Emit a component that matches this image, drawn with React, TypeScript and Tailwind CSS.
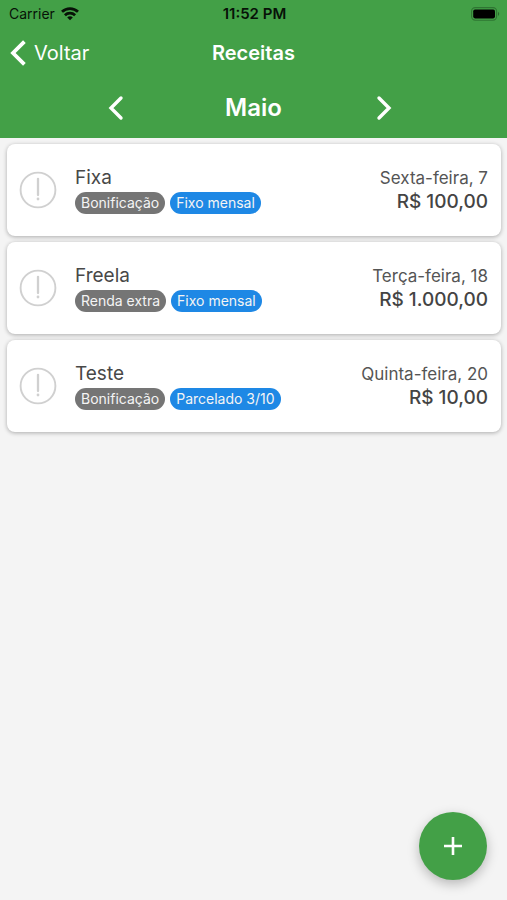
type Income = {
  name: string;
  category: string;
  recurrence: string;
  date: string;
  amount: string;
};

const incomes: Income[] = [
  { name: "Fixa", category: "Bonificação", recurrence: "Fixo mensal", date: "Sexta-feira, 7", amount: "R$ 100,00" },
  { name: "Freela", category: "Renda extra", recurrence: "Fixo mensal", date: "Terça-feira, 18", amount: "R$ 1.000,00" },
  { name: "Teste", category: "Bonificação", recurrence: "Parcelado 3/10", date: "Quinta-feira, 20", amount: "R$ 10,00" },
];

function WifiIcon() {
  return (
    <svg width="18" height="14" viewBox="0 0 18 14" fill="none" stroke="#071207" strokeWidth="2.8" aria-hidden="true">
      <path d="M1 4.8C5.5.6 12.5.6 17 4.8" />
      <path d="M3.9 8.2c2.9-2.7 7.3-2.7 10.2 0" />
      <path d="M9 13.2 6.2 10.4c1.6-1.4 4-1.4 5.6 0z" fill="#071207" stroke="none" />
    </svg>
  );
}

function BatteryIcon() {
  return (
    <svg width="29" height="14" viewBox="0 0 29 14" aria-hidden="true">
      <rect x=".6" y=".6" width="25" height="12.6" rx="3.6" fill="none" stroke="#2f7533" strokeWidth="1.1" />
      <rect x="2.2" y="2.4" width="21.8" height="9" rx="1.8" fill="#000" />
      <path d="M27 4.8c1.6.8 1.6 3.4 0 4.2z" fill="#2b692e" />
    </svg>
  );
}

function BackIcon() {
  return (
    <svg width="16" height="26" viewBox="0 0 16 26" fill="none" stroke="#fff" strokeWidth="3.8" aria-hidden="true">
      <path d="M14.4 1.6 3 13l11.4 11.4" />
    </svg>
  );
}

function ChevronIcon({ next = false }: { next?: boolean }) {
  return (
    <svg width="16" height="26" viewBox="0 0 16 26" fill="none" stroke="#fff" strokeWidth="3.4" strokeLinecap="round" aria-hidden="true">
      <path d={next ? "M3 3l10 10L3 23" : "M13 3 3 13l10 10"} />
    </svg>
  );
}

function AlertIcon() {
  return (
    <svg width="38" height="38" viewBox="0 0 38 38" fill="none" stroke="#d0d0d0" aria-hidden="true">
      <circle cx="19" cy="19" r="17.4" strokeWidth="1.9" />
      <path d="M19 7.8v16.2" strokeWidth="2.3" strokeLinecap="round" />
      <circle cx="19" cy="28" r="1.4" fill="#d0d0d0" stroke="none" />
    </svg>
  );
}

function IncomeCard({ income }: { income: Income }) {
  return (
    <li className="flex h-[92px] items-center rounded-lg bg-white pr-[13px] pl-3 shadow-[0_1px_4px_rgba(0,0,0,0.3)]">
      <AlertIcon />
      <div className="ml-[18px] flex flex-1 flex-col items-start">
        <h2 className="text-[19px] leading-6 text-[#484848]">{income.name}</h2>
        <div className="mt-0.5 flex gap-[5px] text-sm leading-[22px] text-[#f4f4f4]">
          <span className="rounded-full bg-[#757575] px-1.5">{income.category}</span>
          <span className="rounded-full bg-[#1e88e5] px-1.5">{income.recurrence}</span>
        </div>
      </div>
      <div className="text-right">
        <p className="text-[17px] leading-6 text-[#555]">{income.date}</p>
        <p className="text-[19px] leading-6 font-medium text-[#444]">{income.amount}</p>
      </div>
    </li>
  );
}

export default function App() {
  return (
    <div className="flex min-h-screen flex-col bg-[#f4f4f4] font-['Inter','Liberation_Sans',sans-serif]">
      <header className="bg-[#43a047] text-white">
        <div className="grid h-[27px] grid-cols-3 items-center pr-[7px] pl-[9px] text-sm text-[#071207]">
          <div className="flex items-center gap-1.5">
            <span>Carrier</span>
            <WifiIcon />
          </div>
          <span className="text-center text-[15px] font-semibold">11:52 PM</span>
          <div className="flex justify-end">
            <BatteryIcon />
          </div>
        </div>
        <nav className="grid h-[51px] grid-cols-3 items-center px-[10px]">
          <button type="button" className="flex items-center gap-2 text-xl">
            <BackIcon />
            Voltar
          </button>
          <h1 className="text-center text-xl font-semibold">Receitas</h1>
        </nav>
        <div className="flex h-[60px] items-center justify-between px-[108px]">
          <button type="button" aria-label="Mês anterior" className="w-[23px]">
            <ChevronIcon />
          </button>
          <span className="text-2xl font-semibold">Maio</span>
          <button type="button" aria-label="Próximo mês" className="w-[23px]">
            <ChevronIcon next />
          </button>
        </div>
      </header>
      <main className="flex-1 px-1.5 pt-1.5">
        <ul className="flex flex-col gap-1.5 pl-px">
          {incomes.map((income) => (
            <IncomeCard key={income.name} income={income} />
          ))}
        </ul>
      </main>
      <button
        type="button"
        aria-label="Adicionar receita"
        className="fixed right-5 bottom-5 flex size-[68px] items-center justify-center rounded-full bg-[#43a047] shadow-[0_4px_12px_rgba(0,0,0,0.25)]"
      >
        <svg width="18" height="18" viewBox="0 0 18 18" stroke="#fff" strokeWidth="2.6" aria-hidden="true">
          <path d="M9 0v18M0 9h18" />
        </svg>
      </button>
    </div>
  );
}
